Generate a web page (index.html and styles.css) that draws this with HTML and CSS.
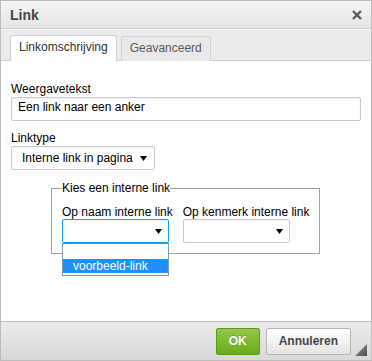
FILE: index.html
```html
<!DOCTYPE html>
<html>
<head>
<meta charset="utf-8">
<link rel="stylesheet" href="styles.css">
</head>
<body>
<div class="dialog">
  <div class="title">
    <span>Link</span>
    <svg class="close" width="10" height="10" viewBox="0 0 10 10"><path d="M1 1L9 9M9 1L1 9" stroke="#5a5a5a" stroke-width="2.4" fill="none"/></svg>
  </div>
  <div class="tabs">
    <div class="tab active">Linkomschrijving</div>
    <div class="tab">Geavanceerd</div>
  </div>
  <div class="body">
    <label class="lbl">Weergavetekst</label>
    <div class="input">Een link naar een anker</div>
    <label class="lbl lbl-gap">Linktype</label>
    <div class="sel sel-type"><span>Interne link in pagina</span><svg width="7" height="5" viewBox="0 0 7 5"><path d="M0 0H7L3.5 5Z" fill="#000"/></svg></div>
    <fieldset class="group">
      <legend>Kies een interne link</legend>
      <div class="row">
        <div class="col">
          <label class="lbl">Op naam interne link</label>
          <div class="sel sel-small focused"><span></span><svg width="7" height="5" viewBox="0 0 7 5"><path d="M0 0H7L3.5 5Z" fill="#000"/></svg>
            <div class="drop">
              <div class="opt"></div>
              <div class="opt hl">voorbeeld-link</div>
            </div>
          </div>
        </div>
        <div class="col">
          <label class="lbl">Op kenmerk interne link</label>
          <div class="sel sel-small"><span></span><svg width="7" height="5" viewBox="0 0 7 5"><path d="M0 0H7L3.5 5Z" fill="#000"/></svg></div>
        </div>
      </div>
    </fieldset>
  </div>
  <div class="footer">
    <div class="btn ok">OK</div>
    <div class="btn cancel">Annuleren</div>
    <svg class="grip" width="12" height="12" viewBox="0 0 12 12"><defs><linearGradient id="g" x1="0" y1="0" x2="1" y2="1"><stop offset="0" stop-color="#9a9a9a"/><stop offset="1" stop-color="#4d4d4d"/></linearGradient></defs><path d="M12 0V12H0Z" fill="url(#g)"/></svg>
  </div>
</div>
</body>
</html>
```
FILE: styles.css
```css
html, body {
  margin: 0;
  padding: 0;
  background: #fff;
}
.dialog {
  width: 372px;
  height: 361px;
  box-sizing: border-box;
  border: 1px solid #bcbcbc;
  display: flex;
  flex-direction: column;
  font-family: "Liberation Sans", Arial, sans-serif;
  font-size: 12px;
  color: #000;
  position: relative;
  background: #fff;
}
.title {
  height: 28px;
  box-sizing: border-box;
  flex: none;
  border-bottom: 1px solid #d1d1d1;
  background: linear-gradient(#f5f5f5, #e5e5e5);
  display: flex;
  align-items: center;
  justify-content: space-between;
  padding: 0 9px 0 9px;
  font-weight: bold;
  font-size: 14px;
  color: #474747;
}
.close {
  display: block;
  margin-top: 1px;
}
.tabs {
  height: 32px;
  box-sizing: border-box;
  flex: none;
  background: #ebebeb;
  border-top: 1px solid #f8f8f8;
  border-bottom: 1px solid #d1d1d1;
  display: flex;
  align-items: flex-end;
  gap: 4px;
  padding-left: 9px;
}
.tab {
  height: 25px;
  box-sizing: border-box;
  border: 1px solid #d1d1d1;
  border-bottom: none;
  border-radius: 3px 3px 0 0;
  padding: 0 8px;
  line-height: 22px;
  color: #595959;
  background: #e9e9e9;
  margin-bottom: -1px;
}
.tab.active {
  background: #fff;
  color: #333;
  height: 26px;
}
.body {
  flex: 1;
  padding: 21px 10px 0 10px;
  background: #fff;
}
.lbl {
  display: block;
  line-height: 14px;
  margin-bottom: 1px;
  white-space: nowrap;
}
.lbl-gap {
  margin-top: 10px;
}
.input {
  height: 24px;
  box-sizing: border-box;
  border: 1px solid #c9cccf;
  border-radius: 2px;
  box-shadow: inset 0 1px 2px rgba(0, 0, 0, 0.08);
  padding: 0 6px;
  line-height: 19px;
  color: #000;
}
.sel {
  height: 24px;
  box-sizing: border-box;
  border: 1px solid #c9cccf;
  border-radius: 2px;
  box-shadow: inset 0 1px 2px rgba(0, 0, 0, 0.06);
  display: flex;
  align-items: center;
  justify-content: space-between;
  line-height: 20px;
  background: #fff;
  position: relative;
}
.sel svg {
  display: block;
}
.sel-type {
  width: 144px;
  padding: 0 7px 0 10px;
}
.sel-small {
  width: 107px;
  padding: 0 6px 0 8px;
}
.sel.focused {
  border-color: #139ff7;
}
.group {
  width: fit-content;
  margin: 11px 0 0 40px;
  padding: 10px 10px 10px 10px;
  border: 1px solid #a0a0a0;
}
.group legend {
  padding: 0;
  line-height: 14px;
}
.row {
  display: flex;
  gap: 10px;
}
.col {
  display: flex;
  flex-direction: column;
}
.col .lbl {
  margin-bottom: 0;
}
.drop {
  position: absolute;
  top: 23px;
  left: -1px;
  width: 107px;
  box-sizing: border-box;
  border: 1px solid #7f9db9;
  border-top-color: #139ff7;
  background: #fff;
  padding-bottom: 2px;
  z-index: 5;
}
.opt {
  height: 15px;
  line-height: 15px;
  padding-left: 10px;
}
.opt.hl {
  background: #1e90ff;
  color: #fff;
  height: 14px;
  line-height: 14px;
}
.footer {
  height: 39px;
  box-sizing: border-box;
  flex: none;
  border-top: 1px solid #bcbcbc;
  background: linear-gradient(#ebebeb, #d9d9d9);
  display: flex;
  align-items: center;
  justify-content: flex-end;
  gap: 6px;
  padding-right: 20px;
  position: relative;
}
.btn {
  height: 27px;
  box-sizing: border-box;
  border-radius: 2px;
  padding: 0 12px;
  line-height: 25px;
  font-weight: bold;
  font-size: 12px;
}
.ok {
  border: 1px solid #5b9c18;
  background: linear-gradient(#93c94a, #69ab18);
  color: #fff;
  text-shadow: 0 -1px 0 rgba(0, 0, 0, 0.2);
}
.cancel {
  border: 1px solid #b6b6b6;
  background: linear-gradient(#fff, #e4e4e4);
  color: #474747;
}
.grip {
  position: absolute;
  right: 4px;
  bottom: 4px;
  display: block;
}
```
